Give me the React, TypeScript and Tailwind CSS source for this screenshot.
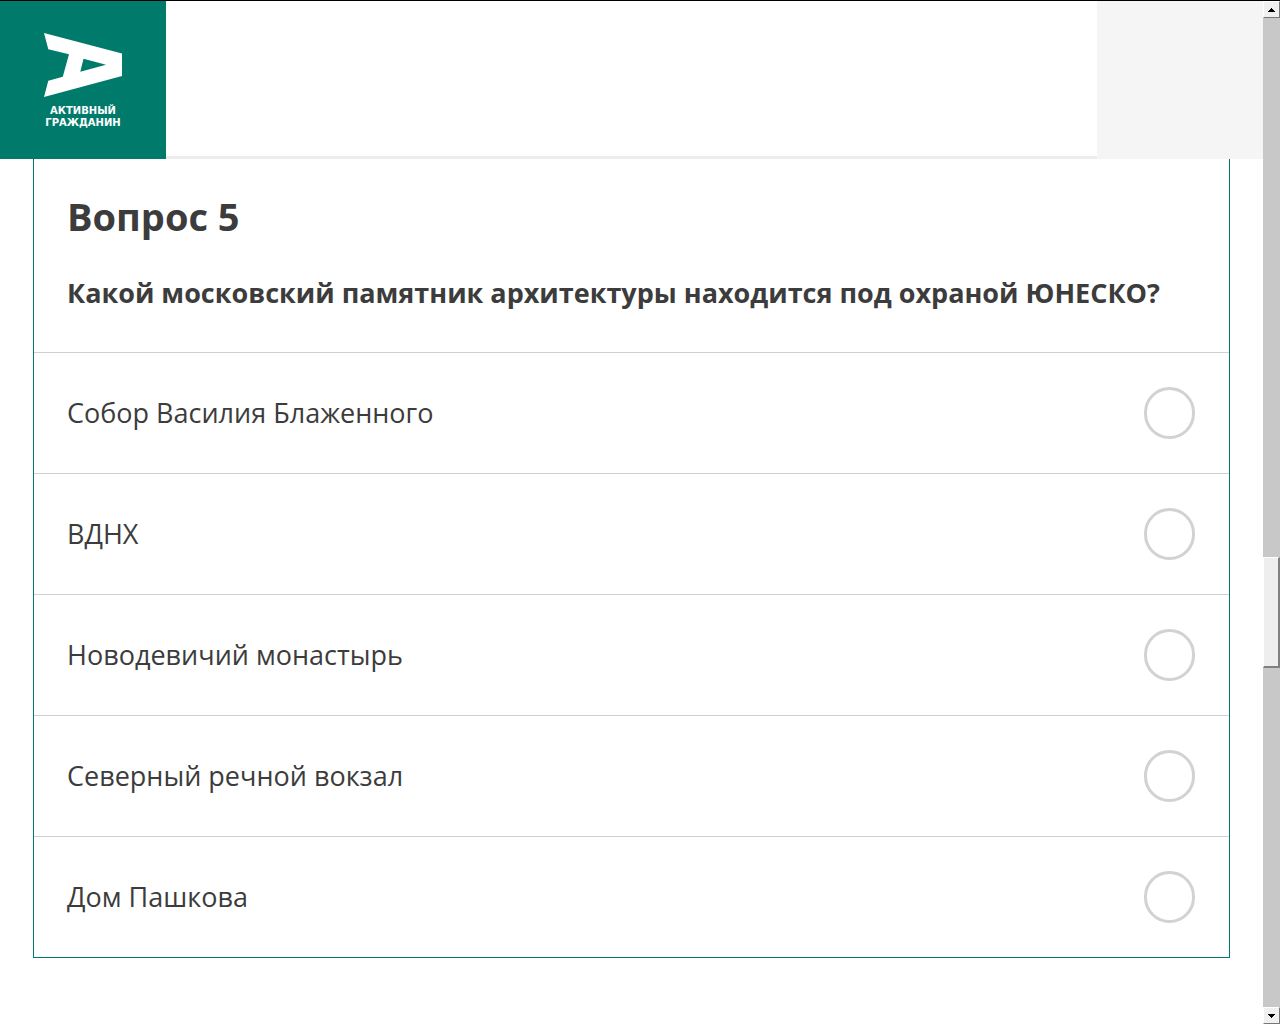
const answers = [
  'Собор Василия Блаженного',
  'ВДНХ',
  'Новодевичий монастырь',
  'Северный речной вокзал',
  'Дом Пашкова',
];

function Logo() {
  return (
    <a href="#" className="flex w-[166px] flex-col items-center bg-[#007b6b] pt-8 text-white">
      <svg width="78" height="64" viewBox="0 0 78 64" fill="currentColor" aria-hidden="true">
        <path fillRule="evenodd" d="M0 0 78 20.5V43L0 64 4.3 47.8 18.8 43.8 25 21.2 4.3 16.2ZM39.5 25.8 36.3 38.8 62 31.8Z" />
      </svg>
      <span className="mt-2 text-center font-['DejaVu_Sans',sans-serif] text-[10px] leading-3 font-bold">
        АКТИВНЫЙ
        <br />
        ГРАЖДАНИН
      </span>
    </a>
  );
}

function Header() {
  return (
    <header className="flex h-[158px]">
      <Logo />
      <div className="flex-1 border-b-3 border-[#ededed] bg-white" />
      <div className="w-[166px] bg-[#f5f5f5]" />
    </header>
  );
}

function Answer({ text }: { text: string }) {
  return (
    <label className="flex h-[121px] cursor-pointer items-center justify-between border-t border-[#d0d0d0] pr-[34px] pl-[33px] text-[27px]">
      <span>{text}</span>
      <input
        type="radio"
        name="question5"
        value={text}
        className="h-[52px] w-[51px] shrink-0 appearance-none rounded-full border-3 border-[#d2d2d2] bg-white checked:border-[#007b6b] checked:bg-[#007b6b]"
      />
    </label>
  );
}

function ArrowButton({ down }: { down?: boolean }) {
  return (
    <button
      type="button"
      aria-label={down ? 'Прокрутить вниз' : 'Прокрутить вверх'}
      className="flex h-[17px] w-full items-center justify-center border border-t-white border-r-[#777] border-b-[#777] border-l-white bg-[#f0f0f0]"
    >
      <svg width="7" height="4" viewBox="0 0 7 4" shapeRendering="crispEdges" aria-hidden="true">
        <path d={down ? 'M0 0h7v1H0zM1 1h5v1H1zM2 2h3v1H2zM3 3h1v1H3z' : 'M3 0h1v1H3zM2 1h3v1H2zM1 2h5v1H1zM0 3h7v1H0z'} />
      </svg>
    </button>
  );
}

function ScrollBar() {
  return (
    <div className="flex w-[17px] shrink-0 flex-col bg-[#c8c8c8]">
      <ArrowButton />
      <div className="flex flex-1 flex-col">
        <div className="grow-[539]" />
        <div className="h-[111px] border border-t-white border-r-2 border-r-[#808080] border-b-2 border-b-[#808080] border-l-white bg-[#eeeeee]" />
        <div className="grow-[339]" />
      </div>
      <ArrowButton down />
    </div>
  );
}

export default function App() {
  return (
    <div className="flex min-h-screen border-t border-black bg-white font-['Open_Sans',sans-serif] text-[#3c3c3c]">
      <div className="min-w-0 flex-1">
        <Header />
        <main className="mx-[33px] border border-t-0 border-[#007b6b]">
          <div className="px-[33px] pt-8 pb-[41px]">
            <h1 className="text-[38px] leading-[50px] font-bold">Вопрос 5</h1>
            <h2 className="mt-[34px] text-[27px] leading-9 font-bold">
              Какой московский памятник архитектуры находится под охраной ЮНЕСКО?
            </h2>
          </div>
          <form>
            {answers.map((text) => (
              <Answer key={text} text={text} />
            ))}
          </form>
        </main>
      </div>
      <ScrollBar />
    </div>
  );
}
